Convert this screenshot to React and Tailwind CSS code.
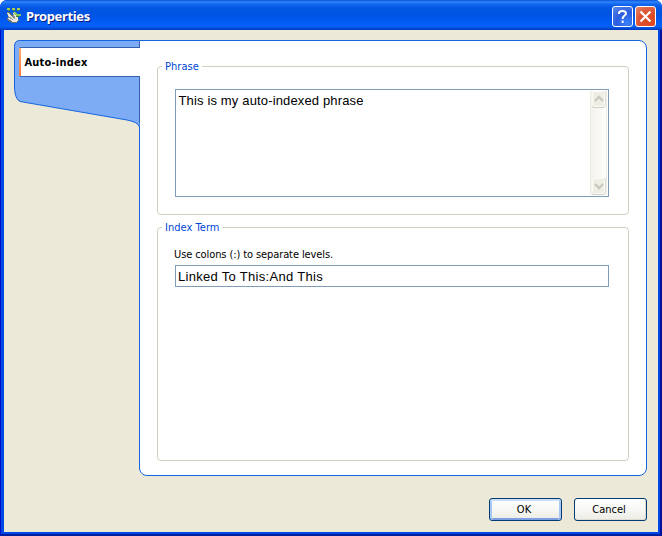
import React from 'react';

function AppIcon() {
  return (
    <svg width="16" height="16" viewBox="0 0 16 16" shapeRendering="crispEdges" className="shrink-0">
      <path d="M1 0h3v2H1zM6 0h3v2H6zM11 0h3v2h-3z" fill="#a8cf4a" />
      <path d="M2 2h2v1H2zM7 2h2v1H7zM11 2h2v1h-2z" fill="#4d8b42" />
      <path d="M1 4h3l3 4 1-4h2l2 5 1 3-3 3H6l-4-2-1-3 1-1z" fill="#68726f" />
      <path d="M1 5h2l4 5 1-1-1-4h2l3 5v3l-2 1H7l-3-2H3l-1-2 3 1-3-4z" fill="#e6e7e0" />
      <path d="M2 8l5 4M7 6l2 5" stroke="#929a95" fill="none" />
      <path d="M6 4h4l1 2h4v2h-4L8 6z" fill="#86c65c" />
      <path d="M10 8h3v1h-3z" fill="#3c7d31" />
    </svg>
  );
}

function TitleBar() {
  return (
    <header className="flex h-[30px] shrink-0 items-start rounded-t-[7px] bg-[linear-gradient(180deg,#0a52d8_0px,#2f86fa_2px,#1468f0_4px,#0456e2_8px,#0054e3_15px,#005cf4_22px,#0462f8_26px,#0250dc_28px,#0038b8_30px)] pl-1.5 pr-1.5">
      <div className="mt-2">
        <AppIcon />
      </div>
      <h1 className="ml-1 mt-[7px] grow whitespace-nowrap font-['Noto_Sans','Open_Sans',sans-serif] text-[13px] font-bold leading-[18px] tracking-[-0.35px] text-white [text-shadow:1px_1px_0_#0a1883]">
        Properties
      </h1>
      <div className="mt-1.5 flex gap-0.5">
        <button
          aria-label="Help"
          className="flex size-[21px] items-center justify-center rounded-[3px] border border-white bg-[radial-gradient(circle_at_75%_85%,#3b80f8,#2a5ee0_50%,#5c88ea)]"
        >
          <svg width="19" height="19" viewBox="0 0 19 19" fill="none" stroke="white" strokeWidth="2">
            <path d="M6 7V6C6 3.3 13 3.3 13 6.4C13 8.6 9.6 8.6 9.6 12" />
            <path d="M9.6 13.5V16" />
          </svg>
        </button>
        <button
          aria-label="Close"
          className="flex size-[21px] items-center justify-center rounded-[3px] border border-white bg-[radial-gradient(circle_at_75%_80%,#e0481c,#dc5030_50%,#e88468)]"
        >
          <svg width="19" height="19" viewBox="0 0 19 19" stroke="white" strokeWidth="2.2">
            <path d="M4.5 4.5l10 10M14.5 4.5l-10 10" />
          </svg>
        </button>
      </div>
    </header>
  );
}

function TabRail() {
  return (
    <nav className="relative z-10 -mr-px w-[126px] shrink-0 pt-[7px]">
      <svg width="126" height="90" viewBox="0 0 126 90" className="absolute left-0 top-0">
        <path
          d="M125.5.5H5.5Q.5.5.5 6.5V48Q1 59 6 61.5L113 80Q124 82 125.5 87Z"
          fill="#7eacf4"
        />
        <path
          d="M125.5.5H5.5Q.5.5.5 6.5V48Q1 59 6 61.5L113 80Q124 82 125.5 87"
          fill="none"
          stroke="#1465e0"
        />
        <path d="M125.5 1V7.5M125.5 36V83" stroke="#3263ae" />
      </svg>
      <div className="relative ml-[5px] flex h-[30px] w-[121px] items-center rounded-l-[2px] border-y border-[#3263ae] bg-white">
        <span className="h-full w-0.5 bg-[linear-gradient(180deg,#ffac70,#ff7b35)]" />
        <span className="ml-[3.5px] mt-0.5 whitespace-nowrap font-['DejaVu_Sans_Condensed','DejaVu_Sans',sans-serif] text-[11px] font-bold leading-[14px] tracking-[0.2px] text-black">
          Auto-index
        </span>
      </div>
    </nav>
  );
}

function Group({ title, className, children }) {
  return (
    <section className={`rounded-[4px] border border-[#d0d0bf] ${className}`}>
      <h2 className="-mt-[7px] ml-1 w-fit whitespace-nowrap bg-white pl-[3px] pr-[3px] font-['DejaVu_Sans_Condensed','DejaVu_Sans',sans-serif] text-[11px] leading-[14px] tracking-[0.04px] text-[#0046d5]">
        {title}
      </h2>
      {children}
    </section>
  );
}

function ScrollButton({ down }) {
  return (
    <div className="mx-px flex h-4 items-center justify-center rounded-[2px] border border-[#fbfbf8] bg-[#eeeee5] shadow-[0_1px_0_#cfcfc2,1px_0_0_#deded4]">
      <svg width="10" height="8" viewBox="0 0 10 8" fill="none" stroke="#c9c9c0" strokeWidth="2.3">
        <path d={down ? 'M1 2l4 4 4-4' : 'M1 6l4-4 4 4'} />
      </svg>
    </div>
  );
}

function PushButton({ children, focused }) {
  return (
    <button
      className={`flex h-[23px] w-[73px] items-center justify-center rounded-[3px] border border-[#003c74] bg-[linear-gradient(180deg,#ffffff,#f6f6f2_55%,#ecebe5)] pr-[3px] pt-0.5 font-['DejaVu_Sans_Condensed','DejaVu_Sans',sans-serif] text-[11px] text-black ${
        focused
          ? 'shadow-[inset_0_2px_0_#cbdffb,inset_2px_0_0_#a9c6f2,inset_-2px_0_0_#a9c6f2,inset_0_-2px_0_#7d9fe2]'
          : 'shadow-[inset_-1px_-1px_0_#dedbd0]'
      }`}
    >
      {children}
    </button>
  );
}

export default function App() {
  return (
    <div className="flex h-[536px] w-[662px] flex-col overflow-hidden bg-white">
      <div className="flex grow flex-col rounded-t-[7px] bg-[#0048e4]">
        <TitleBar />
        <div className="flex grow border-b-2 border-l border-r-2 border-b-[#001ea0] border-l-[#0010c8] border-r-[#00109c]">
          <div className="mb-0.5 ml-[3px] mr-0.5 flex grow flex-col bg-[#ece9d8] pl-2.5 pr-[11px] pt-2.5">
            <div className="flex h-[436px]">
              <TabRail />
              <main className="flex w-[508px] shrink-0 flex-col gap-3 rounded-r-[8px] rounded-bl-[8px] border border-[#1465e0] bg-white pl-[17px] pr-[17px] pt-[25px]">
                <Group title="Phrase" className="h-[149px]">
                  <div className="ml-[17px] mt-[15px] flex h-[108px] w-[434px] border border-[#7f9db9] bg-white p-px">
                    <p className="grow whitespace-nowrap pl-[1.5px] pt-px font-['Liberation_Sans',Arial,sans-serif] text-[13px] leading-[17px] tracking-[0.15px] text-black">
                      This is my auto-indexed phrase
                    </p>
                    <div className="flex w-[17px] flex-col justify-between border-x border-[#eeede5] bg-[linear-gradient(90deg,#f3f2ec,#fefefb)] pb-px">
                      <ScrollButton />
                      <ScrollButton down />
                    </div>
                  </div>
                </Group>
                <Group title="Index Term" className="h-[234px]">
                  <p className="ml-4 mt-[13px] whitespace-nowrap font-['DejaVu_Sans_Condensed','DejaVu_Sans',sans-serif] text-[11px] leading-[14px] tracking-[-0.1px] text-black">
                    Use colons (:) to separate levels.
                  </p>
                  <div className="ml-[17px] mt-[3px] flex h-[22px] w-[434px] items-center whitespace-nowrap border border-[#7f9db9] bg-white pl-[2px] pt-0.5 font-['Liberation_Sans',Arial,sans-serif] text-[13px] tracking-[0.3px] text-black">
                    Linked To This:And This
                  </div>
                </Group>
              </main>
            </div>
            <footer className="mt-[22px] flex justify-end gap-3">
              <PushButton focused>OK</PushButton>
              <PushButton>Cancel</PushButton>
            </footer>
          </div>
        </div>
      </div>
    </div>
  );
}
